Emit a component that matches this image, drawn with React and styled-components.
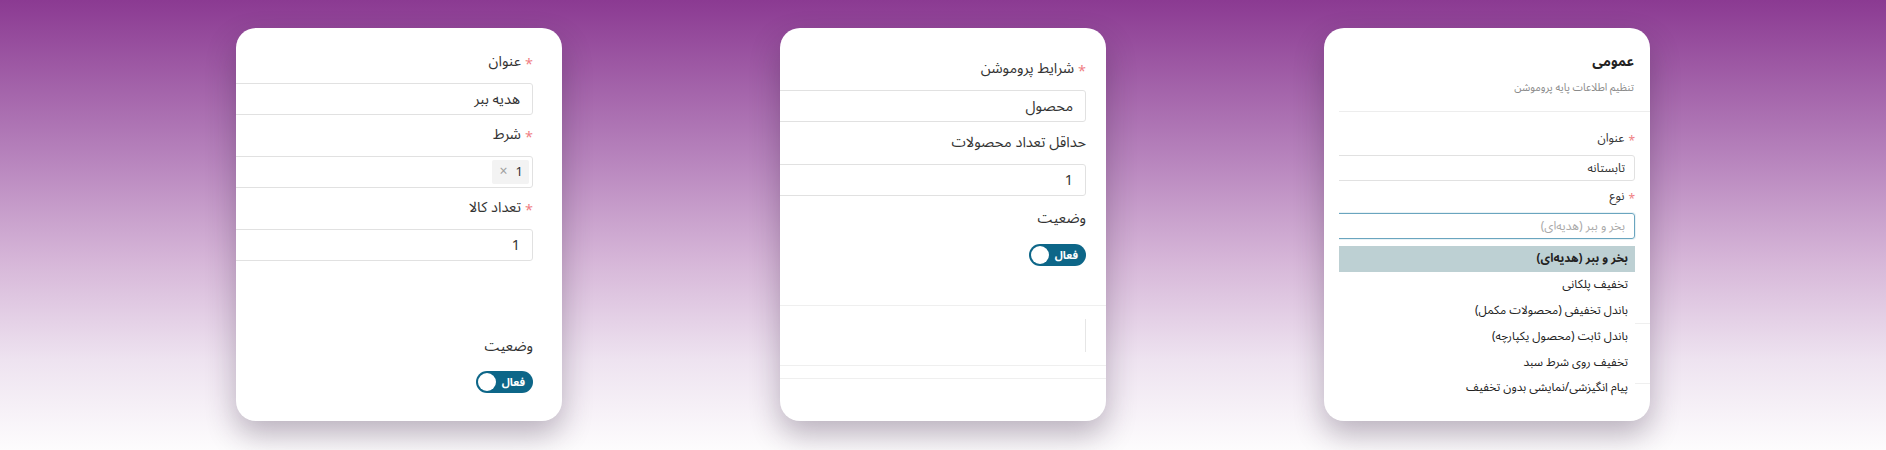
import React from "react";
import styled, { createGlobalStyle } from "styled-components";

const GlobalStyle = createGlobalStyle`
  html, body {
    margin: 0;
    padding: 0;
  }
  body {
    font-family: "Noto Sans Arabic", "DejaVu Sans", sans-serif;
    color: #333;
  }
`;

const Page = styled.div`
  width: 1886px;
  height: 450px;
  box-sizing: border-box;
  padding-top: 28px;
  display: flex;
  justify-content: center;
  gap: 218px;
  overflow: hidden;
  background: linear-gradient(180deg, #8b3a92 0%, #b47fba 33%, #d6b6d8 58%, #eee3f0 80%, #fdfcfd 100%);
`;

const Card = styled.div`
  width: 326px;
  height: 393px;
  flex: none;
  box-sizing: border-box;
  direction: rtl;
  background: #fff;
  border-radius: 20px;
  overflow: hidden;
  padding-right: ${(p) => p.$inset || 0}px;
  padding-top: ${(p) => p.$top || 0}px;
  box-shadow: 0 14px 30px rgba(45, 25, 55, 0.3);
`;

// card 3 shows its form inside a narrower frame
const Viewport = styled.div`
  height: 100%;
  margin-left: 15px;
  overflow: hidden;
  position: relative;
`;

const Section = styled.div`
  padding-right: ${(p) => p.$inset}px;
`;

const Field = styled.div`
  position: relative;
  margin-bottom: ${(p) => p.$gap ?? 9}px;
`;

const Label = styled.div`
  font-size: ${(p) => p.$size || 14.5}px;
  line-height: ${(p) => p.$lh || 22}px;
  margin-bottom: ${(p) => p.$mb ?? 10}px;
  color: #333;
  white-space: nowrap;
`;

const Star = styled.span`
  display: inline-block;
  color: #f07f84;
  margin-left: 4px;
  transform: translateY(3px);
`;

const Input = styled.div`
  width: 520px;
  height: ${(p) => p.$h || 32}px;
  box-sizing: border-box;
  display: flex;
  align-items: center;
  gap: 6px;
  padding: 0 ${(p) => p.$pad || 12}px;
  border: 1px solid ${(p) => (p.$focus ? "#6aa5bf" : "#e1e1e1")};
  border-radius: 3px;
  font-size: ${(p) => p.$size || 14.5}px;
  color: ${(p) => (p.$placeholder ? "#a9a9a9" : "#333")};
  white-space: nowrap;
  box-shadow: ${(p) => (p.$focus ? "0 0 0 1px rgba(106,165,191,0.15)" : "none")};
`;

const Tag = styled.span`
  display: inline-flex;
  align-items: center;
  gap: 8px;
  height: 24px;
  padding: 0 6px;
  box-sizing: border-box;
  width: 37px;
  margin-right: -9px;
  background: #f3f3f3;
  border-radius: 2px;
  font-size: 13px;
  color: #333;
`;

const TagClose = styled.span`
  color: #a0a0a0;
  font-size: 14px;
  line-height: 1;
`;

const Spacer = styled.div`
  height: ${(p) => p.$h}px;
`;

const Toggle = styled.div`
  width: 57px;
  height: 22px;
  box-sizing: border-box;
  border-radius: 11px;
  background: #0d6688;
  display: flex;
  align-items: center;
  justify-content: space-between;
  padding: 0 8px 0 2px;
  color: #fff;
  font-size: 11px;
  font-weight: bold;
`;

const Knob = styled.span`
  width: 18px;
  height: 18px;
  border-radius: 50%;
  background: #fff;
`;

const Divider = styled.div`
  height: 0;
  border-top: 1px solid #efefef;
  margin-top: ${(p) => p.$mt || 0}px;
`;

const EmptyBox = styled.div`
  height: 33px;
  margin: 13px 20px 13px 0;
  border-right: 1px solid #e6e6e6;
`;

const Header = styled.div`
  padding: 24px 16px 14px 0;
  border-bottom: 1px solid #ededed;
`;

const Title = styled.div`
  font-size: 13.5px;
  font-weight: bold;
  line-height: 20px;
  color: #222;
`;

const Subtitle = styled.div`
  margin-top: 7px;
  font-size: 10.5px;
  line-height: 18px;
  color: #8a8a8a;
`;

const Menu = styled.div`
  position: absolute;
  top: calc(100% + 7px);
  right: 0;
  width: 330px;
  background: #fff;
  z-index: 2;
`;

const Option = styled.div`
  height: 25.8px;
  display: flex;
  align-items: center;
  padding-right: 7px;
  font-size: 11.8px;
  white-space: nowrap;
  color: #222;
  font-weight: ${(p) => (p.$active ? "bold" : "normal")};
  background: ${(p) => (p.$active ? "#bdd0d3" : "transparent")};
`;

const options = [
  "بخر و ببر (هدیه‌ای)",
  "تخفیف پلکانی",
  "باندل تخفیفی (محصولات مکمل)",
  "باندل ثابت (محصول یکپارچه)",
  "تخفیف روی شرط سبد",
  "پیام انگیزشی/نمایشی بدون تخفیف",
];

const StatusToggle = () => (
  <Toggle>
    <span>فعال</span>
    <Knob />
  </Toggle>
);

export default function App() {
  return (
    <>
      <GlobalStyle />
      <Page>
        {/* Gift rule card */}
        <Card $inset={29} $top={23}>
          <Field>
            <Label>
              <Star>*</Star>عنوان
            </Label>
            <Input>هدیه ببر</Input>
          </Field>
          <Field>
            <Label>
              <Star>*</Star>شرط
            </Label>
            <Input>
              <Tag>
                <span>1</span>
                <TagClose>×</TagClose>
              </Tag>
            </Input>
          </Field>
          <Field $gap={0}>
            <Label>
              <Star>*</Star>تعداد کالا
            </Label>
            <Input>1</Input>
          </Field>
          <Spacer $h={75} />
          <Label $mb={13}>وضعیت</Label>
          <StatusToggle />
        </Card>

        {/* Conditions card */}
        <Card $top={30}>
          <Section $inset={20}>
            <Field $gap={10}>
              <Label>
                <Star>*</Star>شرایط پروموشن
              </Label>
              <Input>محصول</Input>
            </Field>
            <Field $gap={12}>
              <Label>حداقل تعداد محصولات</Label>
              <Input>1</Input>
            </Field>
            <Label $mb={14}>وضعیت</Label>
            <StatusToggle />
          </Section>
          <Divider $mt={39} />
          <EmptyBox />
          <Divider />
          <Divider $mt={12} />
        </Card>

        {/* General info card */}
        <Card>
          <Viewport>
            <Header>
              <Title>عمومی</Title>
              <Subtitle>تنظیم اطلاعات پایه پروموشن</Subtitle>
            </Header>
            <Section $inset={15}>
              <Spacer $h={18} />
              <Field $gap={7}>
                <Label $size={12} $lh={18} $mb={7}>
                  <Star>*</Star>عنوان
                </Label>
                <Input $h={26} $size={12} $pad={9}>
                  تابستانه
                </Input>
              </Field>
              <Field $gap={0}>
                <Label $size={12} $lh={18} $mb={7}>
                  <Star>*</Star>نوع
                </Label>
                <Input $h={26} $size={12} $pad={9} $focus $placeholder>
                  بخر و ببر (هدیه‌ای)
                </Input>
                <Menu>
                  {options.map((o, i) => (
                    <Option key={o} $active={i === 0}>
                      {o}
                    </Option>
                  ))}
                </Menu>
              </Field>
            </Section>
            <Divider $mt={84} />
            <Divider $mt={59} />
          </Viewport>
        </Card>
      </Page>
    </>
  );
}
